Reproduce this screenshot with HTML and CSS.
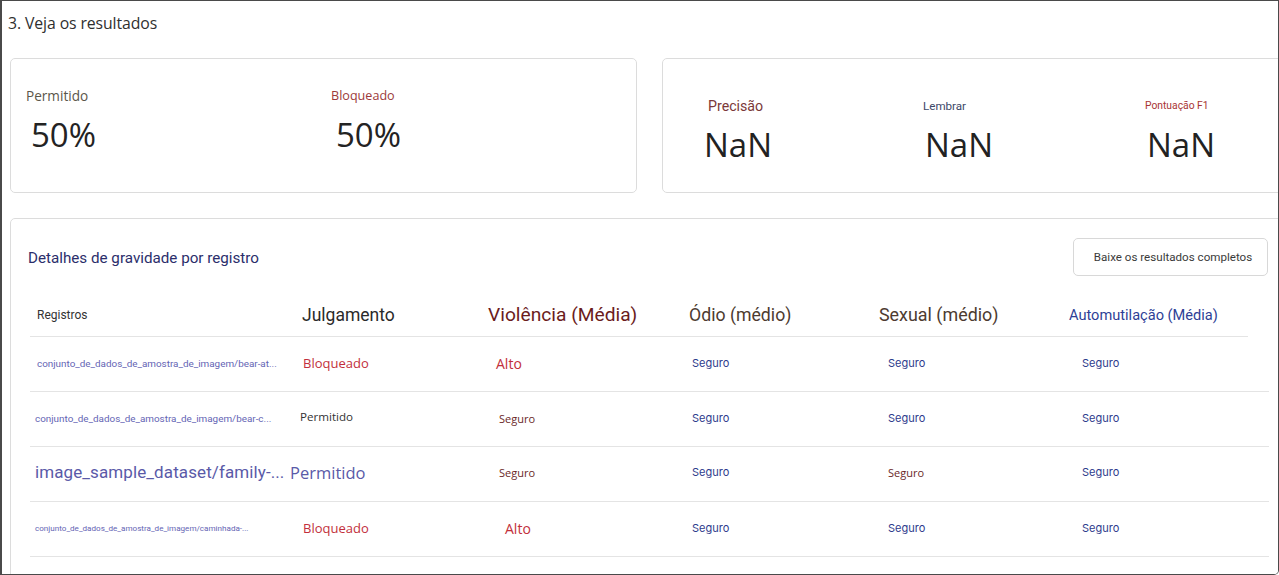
FILE: index.html
```html
<!DOCTYPE html>
<html lang="pt">
<head>
<meta charset="utf-8">
<title>Veja os resultados</title>
<link rel="stylesheet" href="styles.css">
</head>
<body>
<div class="frame">
  <h2 class="step-title">3. Veja os resultados</h2>

  <div class="metrics">
    <section class="card card-split">
      <div class="metric">
        <div class="m-label lbl-allowed">Permitido</div>
        <div class="m-value">50%</div>
      </div>
      <div class="metric">
        <div class="m-label lbl-blocked">Bloqueado</div>
        <div class="m-value">50%</div>
      </div>
    </section>
    <section class="card card-scores">
      <div class="score">
        <div class="s-label lbl-prec">Precisão</div>
        <div class="s-value">NaN</div>
      </div>
      <div class="score">
        <div class="s-label lbl-recall">Lembrar</div>
        <div class="s-value">NaN</div>
      </div>
      <div class="score">
        <div class="s-label lbl-f1">Pontuação F1</div>
        <div class="s-value">NaN</div>
      </div>
    </section>
  </div>

  <section class="card details">
    <div class="details-bar">
      <h3 class="details-title">Detalhes de gravidade por registro</h3>
      <button class="btn-download">Baixe os resultados completos</button>
    </div>

    <div class="table">
      <div class="row head">
        <div class="c c1 h-reg">Registros</div>
        <div class="c c2 h-jud">Julgamento</div>
        <div class="c c3 h-vio">Violência (Média)</div>
        <div class="c c4 h-odio">Ódio (médio)</div>
        <div class="c c5 h-sex">Sexual (médio)</div>
        <div class="c c6 h-auto">Automutilação (Média)</div>
      </div>

      <div class="row">
        <div class="c c1 path path-sm pad7">conjunto_de_dados_de_amostra_de_imagem/bear-at...</div>
        <div class="c c2 v-blocked">Bloqueado</div>
        <div class="c c3 v-high">Alto</div>
        <div class="c c4 safe-blue">Seguro</div>
        <div class="c c5 safe-blue">Seguro</div>
        <div class="c c6 safe-blue">Seguro</div>
      </div>

      <div class="row">
        <div class="c c1 path path-sm">conjunto_de_dados_de_amostra_de_imagem/bear-c...</div>
        <div class="c c2 v-allowed">Permitido</div>
        <div class="c c3 safe-red">Seguro</div>
        <div class="c c4 safe-blue">Seguro</div>
        <div class="c c5 safe-blue">Seguro</div>
        <div class="c c6 safe-blue">Seguro</div>
      </div>

      <div class="row row-lg">
        <div class="c c1 path path-lg">image_sample_dataset/family-...</div>
        <div class="c c2 v-allowed-lg">Permitido</div>
        <div class="c c3 safe-red">Seguro</div>
        <div class="c c4 safe-blue">Seguro</div>
        <div class="c c5 safe-red">Seguro</div>
        <div class="c c6 safe-blue">Seguro</div>
      </div>

      <div class="row">
        <div class="c c1 path path-xs">conjunto_de_dados_de_amostra_de_imagem/caminhada-...</div>
        <div class="c c2 v-blocked">Bloqueado</div>
        <div class="c c3 v-high v-high-2">Alto</div>
        <div class="c c4 safe-blue">Seguro</div>
        <div class="c c5 safe-blue">Seguro</div>
        <div class="c c6 safe-blue">Seguro</div>
      </div>
    </div>
  </section>
</div>
</body>
</html>
```
FILE: styles.css
```css
* { box-sizing: border-box; }

html, body {
  margin: 0;
  padding: 0;
  background: #ffffff;
}

body {
  font-family: Roboto, "Liberation Sans", sans-serif;
  color: #333;
}

.frame {
  width: 1279px;
  height: 575px;
  border: 1px solid #4a4a4a;
  border-left-width: 2px;
  border-bottom-right-radius: 5px;
  overflow: hidden;
  background: #fff;
}

.step-title {
  margin: 0;
  padding: 12px 0 0 6px;
  height: 33px;
  font-family: "Open Sans", Roboto, sans-serif;
  font-size: 15.8px;
  line-height: 20px;
  font-weight: 400;
  color: #2f2f2f;
  letter-spacing: -0.1px;
}

.card {
  border: 1px solid #dcdcdc;
  border-radius: 5px;
  background: #fff;
}

.metrics {
  display: flex;
  gap: 25px;
  margin: 24px 0 0 8px;
  width: 1290px;
}

.card-split {
  width: 627px;
  height: 135px;
  flex: none;
  display: grid;
  grid-template-columns: 305px 1fr;
  padding: 28px 0 0 15px;
}

.m-label {
  font-family: "Open Sans", sans-serif;
  font-size: 13px;
  line-height: 18px;
}
.lbl-allowed { color: #5b564a; font-size: 13.6px; }
.lbl-blocked { color: #9c3a3a; font-size: 12.6px; }

.m-value {
  font-family: "Open Sans", sans-serif;
  font-size: 33px;
  line-height: 40px;
  margin: 10px 0 0 5px;
  color: #232323;
}

.card-scores {
  width: 627px;
  height: 135px;
  flex: none;
  display: grid;
  grid-template-columns: 219px 222px 1fr;
  padding: 38px 0 0 41px;
}

.s-label {
  font-size: 13px;
  line-height: 18px;
  height: 18px;
}
.lbl-prec { color: #7b3838; padding-left: 4px; font-size: 14.2px; }
.lbl-recall { color: #3c4868; font-size: 11.6px; }
.lbl-f1 { color: #a83434; font-size: 10.3px; }

.s-value {
  font-family: "Open Sans", sans-serif;
  font-size: 33px;
  line-height: 40px;
  margin-top: 10px;
  color: #222;
}
.score + .score .s-value { padding-left: 2px; }

.details {
  margin: 25px 0 0 8px;
  width: 1290px;
  height: 400px;
  padding: 19px 31px 0 17px;
}

.details-bar {
  display: flex;
  align-items: center;
  justify-content: space-between;
  height: 38px;
}

.details-title {
  margin: 1px 0 0;
  font-size: 15.2px;
  font-weight: 400;
  color: #2b2e6b;
}

.btn-download {
  height: 38px;
  width: 195px;
  border: 1px solid #d8d8d8;
  border-radius: 5px;
  background: #fff;
  font-family: Roboto, sans-serif;
  font-size: 11.6px;
  color: #3a3a3a;
  padding: 0 0 0 5px;
}

.table {
  margin: 16px 0 0 2px;
  width: 1239px;
}

.row {
  display: grid;
  grid-template-columns: 260px 198px 201px 190px 190px 200px;
  align-items: center;
  height: 55px;
  padding-bottom: 2px;
  border-bottom: 1px solid #e4e4e4;
}
.row-lg { padding-bottom: 4px; }

.row.head {
  height: 45px;
  padding-bottom: 0;
  border-bottom: none;
  background: linear-gradient(#e4e4e4, #e4e4e4) no-repeat left bottom / calc(100% - 21px) 1px;
}

.c {
  white-space: nowrap;
  overflow: visible;
}

.h-reg { font-size: 12px; color: #333; padding-left: 7px; }
.h-jud { font-size: 17.5px; color: #2a2a2a; padding-left: 12px; }
.h-vio { font-size: 19.2px; color: #6b1c1c; }
.h-odio { font-size: 17.7px; color: #4d3b30; }
.h-sex { font-size: 17.9px; color: #4d3b30; }
.h-auto { font-size: 14.6px; color: #2e3f96; }

.path { color: #6464b4; padding-left: 5px; }
.path-sm { font-size: 9.9px; }
.pad7 { padding-left: 7px; }
.path-lg { font-size: 17px; color: #5a5aa8; letter-spacing: 0.1px; }
.path-xs { font-size: 8.1px; }

.v-blocked {
  font-family: "Open Sans", sans-serif;
  font-size: 13px;
  color: #c22f3b;
  padding-left: 13px;
}
.v-allowed {
  font-family: "Open Sans", sans-serif;
  font-size: 11.6px;
  color: #333;
  padding-left: 10px;
  margin-top: -3px;
}
.v-allowed-lg {
  font-family: "Open Sans", sans-serif;
  font-size: 16.5px;
  color: #5a5aa8;
  padding-left: 0;
}

.v-high {
  font-family: "Open Sans", sans-serif;
  font-size: 14px;
  color: #c22f3b;
  padding-left: 8px;
}
.v-high-2 { padding-left: 17px; }

.safe-blue {
  font-family: Inter, sans-serif;
  font-size: 11px;
  color: #2e3b8c;
}
.safe-red {
  font-family: "Open Sans", sans-serif;
  font-size: 11px;
  color: #6b2828;
}
.c3.safe-red { padding-left: 11px; }
.c4.safe-blue { padding-left: 3px; }
.c5 { padding-left: 0; }
.c5.safe-blue, .c5.safe-red { padding-left: 9px; }
.c6.safe-blue { padding-left: 13px; }
```
